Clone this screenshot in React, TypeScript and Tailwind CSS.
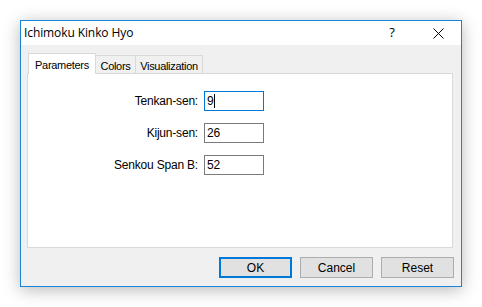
import React from "react";

const font = { fontFamily: '"Liberation Sans", Arial, sans-serif' };

export default function App() {
  return (
    <div className="w-[482px] h-[307px] bg-white pt-[20px] pl-[20px]" style={font}>
      <div className="w-[442px] h-[267px] border border-[#1883d7] bg-[#f0f0f0] flex flex-col shadow-[0_3px_16px_rgba(0,0,0,0.28)]">
        {/* Title bar */}
        <div className="h-[24px] bg-white flex items-center shrink-0">
          <div className="pl-[3px] text-[12px] text-black tracking-[-0.1px]" style={{ fontFamily: '"Open Sans", "Noto Sans", sans-serif' }}>
            Ichimoku Kinko Hyo
          </div>
          <div className="flex-1" />
          <div className="w-[46px] text-center text-[13px] text-black" style={{ fontFamily: '"Open Sans", sans-serif' }}>?</div>
          <div className="w-[46px] flex items-center justify-center">
            <svg width="11" height="11" viewBox="0 0 11 11">
              <path d="M0.5 0.5 L10.5 10.5 M10.5 0.5 L0.5 10.5" stroke="#000" strokeWidth="1" />
            </svg>
          </div>
        </div>
        {/* Client */}
        <div className="flex-1 flex flex-col pl-[6px] pt-[8px]">
          {/* Tabs */}
          <div className="flex items-end h-[20px] pl-[1px] relative z-10 text-[11px] text-black tracking-[-0.3px]">
            <div className="h-[21px] mb-[-1px] w-[68px] bg-white border border-[#d9d9d9] border-b-0 flex items-start justify-center pt-[3px]">
              Parameters
            </div>
            <div className="h-[18px] w-[40px] border border-[#d9d9d9] border-l-0 border-b-0 flex items-start justify-center pt-[2px]">
              Colors
            </div>
            <div className="h-[18px] w-[67px] border border-[#d9d9d9] border-l-0 border-b-0 flex items-start justify-center pt-[2px]">
              Visualization
            </div>
          </div>
          {/* Panel */}
          <div className="w-[426px] h-[175px] bg-white border border-[#d9d9d9] flex flex-col gap-[12px] pt-[17px] text-[12px] text-black tracking-[-0.2px]">
            <Row label="Tenkan-sen:" value="9" focused />
            <Row label="Kijun-sen:" value="26" />
            <Row label="Senkou Span B:" value="52" />
          </div>
          {/* Buttons */}
          <div className="flex justify-end gap-[8px] pr-[7px] pt-[9px] text-[12px] text-black">
            <button className="w-[73px] h-[21px] bg-[#e1e1e1] border-2 border-[#0078d7] flex items-center justify-center">OK</button>
            <button className="w-[73px] h-[21px] bg-[#e1e1e1] border border-[#adadad] flex items-center justify-center">Cancel</button>
            <button className="w-[73px] h-[21px] bg-[#e1e1e1] border border-[#adadad] flex items-center justify-center">Reset</button>
          </div>
        </div>
      </div>
    </div>
  );
}

function Row({ label, value, focused }: { label: string; value: string; focused?: boolean }) {
  return (
    <div className="flex items-center h-[20px]">
      <div className="w-[170px] text-right">{label}</div>
      <div
        className={
          "ml-[6px] w-[60px] h-[20px] border flex items-center pl-[2px] " +
          (focused ? "border-[#0078d7]" : "border-[#7a7a7a]")
        }
      >
        <span>{value}</span>
        {focused && <span className="inline-block w-[1px] h-[14px] bg-black ml-[1px]" />}
      </div>
    </div>
  );
}
